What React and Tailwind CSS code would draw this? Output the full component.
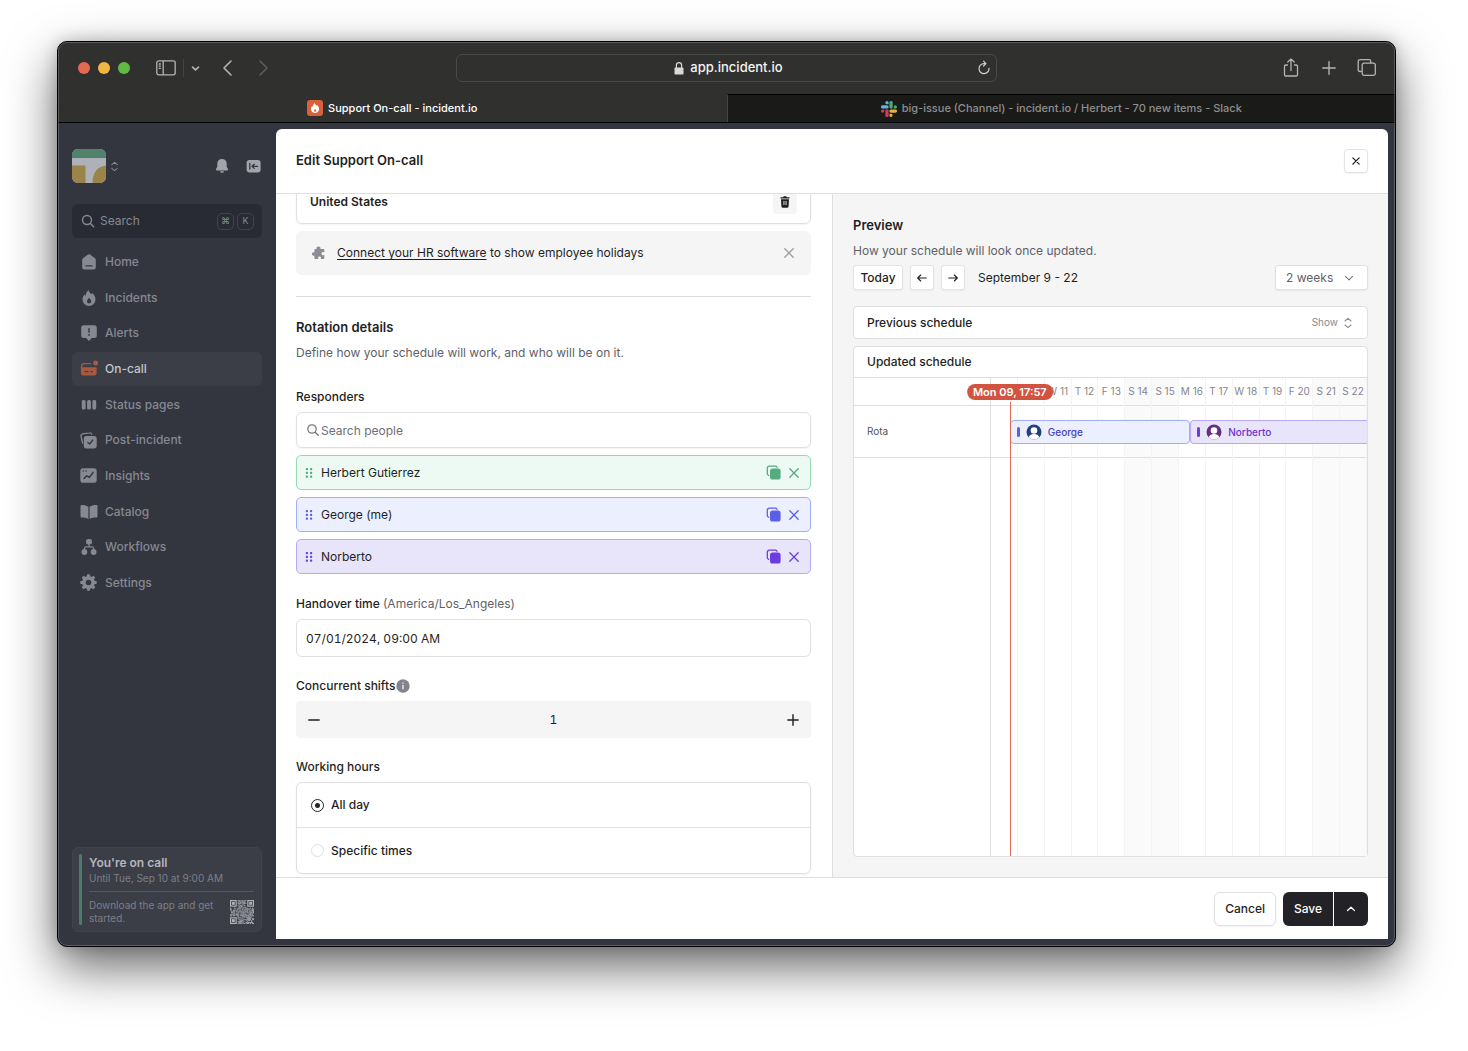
import { useState } from "react";

const NAV = [
  { label: "Home", icon: HomeIcon },
  { label: "Incidents", icon: FlameIcon },
  { label: "Alerts", icon: AlertIcon },
  { label: "On-call", icon: PagerIcon, active: true },
  { label: "Status pages", icon: StatusIcon },
  { label: "Post-incident", icon: PostIcon },
  { label: "Insights", icon: InsightsIcon },
  { label: "Catalog", icon: CatalogIcon },
  { label: "Workflows", icon: WorkflowIcon },
  { label: "Settings", icon: CogIcon },
];

const RESPONDERS = [
  { name: "Herbert Gutierrez", row: "bg-[#ecfaf3] border-[#92dbb3]", ink: "text-[#55ab7e]" },
  { name: "George (me)", row: "bg-[#ebeffe] border-[#a3adf5]", ink: "text-[#5b5fe8]" },
  { name: "Norberto", row: "bg-[#e8e4fa] border-[#b9aaf3]", ink: "text-[#6a3de0]" },
];

const DAYS = [
  "", "", "W 11", "T 12", "F 13", "S 14", "S 15",
  "M 16", "T 17", "W 18", "T 19", "F 20", "S 21", "S 22",
];

function Icon({ children, className = "size-4", box = 16 }) {
  return (
    <svg viewBox={`0 0 ${box} ${box}`} className={`shrink-0 ${className}`} fill="currentColor" aria-hidden="true">
      {children}
    </svg>
  );
}

function Line({ d, className = "size-4", box = 16, width = 1.3 }) {
  return (
    <svg
      viewBox={`0 0 ${box} ${box}`}
      className={`shrink-0 ${className}`}
      fill="none"
      stroke="currentColor"
      strokeWidth={width}
      strokeLinecap="round"
      strokeLinejoin="round"
      aria-hidden="true"
    >
      <path d={d} />
    </svg>
  );
}

function HomeIcon() {
  return (
    <Icon>
      <path fillRule="evenodd" d="M7 .6a1.6 1.6 0 0 1 2 0l5 3.7c.5.4.8 1 .8 1.600V13a2.500 2.500 0 0 1-2.500 2.500H3.700A2.500 2.500 0 0 1 1.200 13V5.900c0-.6.3-1.200.8-1.600zM5 11.300a.65.65 0 0 0 0 1.300h6a.65.65 0 0 0 0-1.300z" />
    </Icon>
  );
}

function FlameIcon() {
  return (
    <Icon>
      <path fillRule="evenodd" d="M7.600 0c.3 2 1.600 3 2.700 4.300.5-.3.7-.7.900-1.200 2 1.700 3.300 3.900 3.300 6.300A6.500 6.500 0 0 1 8 16a6.500 6.500 0 0 1-6.500-6.600c0-2 .8-3.400 2-4.800.2.700.5 1.100 1 1.400C4.700 3.600 5.800 1.400 7.600 0zM8.200 7.800C7.600 9 6 9.700 6 11.400a2.100 2.100 0 0 0 4.200 0c0-1.500-1.300-2.200-2-3.600z" />
    </Icon>
  );
}

function AlertIcon() {
  return (
    <Icon>
      <path fillRule="evenodd" d="M2.700.3h10.600A2.500 2.500 0 0 1 15.800 2.800v7.600a2.500 2.500 0 0 1-2.500 2.500H10.800L8.600 15.500a.8.8 0 0 1-1.200 0L5.200 12.900H2.700A2.500 2.500 0 0 1 .2 10.400V2.800A2.500 2.500 0 0 1 2.700.3zM7.300 3.600v3.700a.7.7 0 0 0 1.400 0V3.600a.7.7 0 0 0-1.400 0zM8 9a.9.9 0 1 0 0 1.800A.9.9 0 0 0 8 9z" />
    </Icon>
  );
}

function PagerIcon() {
  return (
    <Icon className="size-[18px]" box={18}>
      <circle cx="15.600" cy="3" r="2.500" />
      <path d="M1.600 8V5.900a2.300 2.300 0 0 1 2.300-2.300h6.900M1.600 8h14.300" fill="none" stroke="currentColor" strokeWidth="1.400" strokeLinecap="round" />
      <path fillRule="evenodd" d="M.9 8h15.700v4.800a2.800 2.800 0 0 1-2.800 2.800H3.700A2.800 2.800 0 0 1 .9 12.800zM5 11a.6.6 0 0 0 0 1.300h3A.6.6 0 0 0 8 11zm6 0a.6.6 0 0 0 0 1.300h1.300a.6.6 0 0 0 0-1.300z" />
    </Icon>
  );
}

function StatusIcon() {
  return (
    <Icon>
      <rect x="0.800" y="3" width="3.800" height="9.600" rx="1.500" />
      <rect x="6.100" y="3" width="3.800" height="9.600" rx="1.500" />
      <rect x="11.400" y="3" width="3.800" height="9.600" rx="1.500" />
    </Icon>
  );
}

function PostIcon() {
  return (
    <Icon className="size-[17px]" box={17}>
      <path d="M2.600 11.200 1 4.200a2 2 0 0 1 1.600-2.400L9.600.9a2 2 0 0 1 2.200 1.300" fill="none" stroke="currentColor" strokeWidth="1.300" strokeLinecap="round" />
      <path fillRule="evenodd" d="M6.500 4h7.500a2.700 2.700 0 0 1 2.700 2.700v7a2.700 2.700 0 0 1-2.700 2.700H6.500a2.700 2.700 0 0 1-2.700-2.700v-7A2.700 2.700 0 0 1 6.500 4zM12.300 7.600 9.500 11.100 8.300 10a.6.6 0 0 0-.9.900l1.800 1.600a.6.6 0 0 0 .8-.1l3.300-4a.6.6 0 0 0-1-.8z" />
    </Icon>
  );
}

function InsightsIcon() {
  return (
    <Icon className="size-[17px]" box={17}>
      <rect x="0.300" y="1.300" width="16.400" height="14.400" rx="2.800" />
      <path d="M4 11.600 6.800 8.800l2.400 1.700L13.200 5.400M3.200 4h.1M6 4h.1" fill="none" stroke="#33363f" strokeWidth="1.400" strokeLinecap="round" strokeLinejoin="round" />
    </Icon>
  );
}

function CatalogIcon() {
  return (
    <Icon className="size-[18px]" box={18}>
      <path d="M8.400 3.800C6.500 2.600 4.300 2 1.500 2A1 1 0 0 0 .5 3v10.400a1 1 0 0 0 1 1c2.800 0 5 .4 6.900 1.500zM9.600 3.800C11.500 2.600 13.700 2 16.500 2a1 1 0 0 1 1 1v10.400a1 1 0 0 1-1 1c-2.800 0-5 .4-6.900 1.500z" />
    </Icon>
  );
}

function WorkflowIcon() {
  return (
    <Icon>
      <rect x="5" y="0" width="6" height="5.600" rx="2.300" />
      <circle cx="3.400" cy="13" r="2.900" />
      <circle cx="12.600" cy="13" r="2.900" />
      <path d="M8 5v2.800M3.400 11V9.600c0-1 .7-1.800 1.800-1.800h5.600c1.100 0 1.800.8 1.800 1.800V11" fill="none" stroke="currentColor" strokeWidth="1.200" />
    </Icon>
  );
}

function CogIcon() {
  return (
    <Icon className="size-[17px]" box={17}>
      <circle cx="8.500" cy="8.500" r="4.600" fill="none" stroke="currentColor" strokeWidth="3.600" />
      {[0, 45, 90, 135, 180, 225, 270, 315].map((a) => (
        <rect key={a} x="6.900" y="0.200" width="3.200" height="4" rx="1" transform={`rotate(${a} 8.500 8.500)`} />
      ))}
    </Icon>
  );
}

function CopyIcon() {
  return (
    <Icon>
      <path d="M2.700 10.400A1.900 1.900 0 0 1 1.300 8.600V3.200a2 2 0 0 1 2-2h5.900a2 2 0 0 1 1.800 1.100" fill="none" stroke="currentColor" strokeWidth="1.300" strokeLinecap="round" />
      <rect x="4" y="3.600" width="10.600" height="11" rx="2.600" />
    </Icon>
  );
}

function Sorter({ className }) {
  return <Line d="M3 4 6 1.400 9 4M3 8l3 2.600L9 8" box={12} width={1.1} className={className} />;
}

const CROSS = "M3.800 3.800l8.400 8.400M12.200 3.800l-8.400 8.400";

function SlackLogo() {
  return (
    <svg viewBox="0 0 16 16" className="size-4" aria-hidden="true">
      <path fill="#5fb6dc" d="M6 0a1.600 1.600 0 0 0 0 3.300h1.600V1.600A1.600 1.600 0 0 0 6 0zM1.600 4.300a1.600 1.600 0 0 0 0 3.300H6a1.600 1.600 0 0 0 0-3.300z" />
      <path fill="#4fa878" d="M16 6a1.600 1.600 0 0 0-3.300 0v1.600h1.700A1.600 1.600 0 0 0 16 6zM11.700 6V1.600a1.600 1.600 0 0 0-3.300 0V6a1.600 1.600 0 0 0 3.300 0z" />
      <path fill="#e3b03e" d="M10 16a1.600 1.600 0 0 0 0-3.300H8.400v1.700A1.600 1.600 0 0 0 10 16zM14.400 11.700a1.600 1.600 0 0 0 0-3.300H10a1.600 1.600 0 0 0 0 3.300z" />
      <path fill="#cb3d5b" d="M0 10a1.600 1.600 0 0 0 3.300 0V8.400H1.600A1.600 1.600 0 0 0 0 10zM4.300 10v4.400a1.600 1.600 0 0 0 3.300 0V10a1.600 1.600 0 0 0-3.300 0z" />
    </svg>
  );
}

function BrowserChrome() {
  return (
    <header className="shrink-0 bg-[#30302e] text-[#b4b4b2]">
      <div className="grid h-[52px] grid-cols-[1fr_minmax(0,541px)_1fr] items-center">
        <div className="flex items-center pl-5">
          <div className="flex gap-2">
            <span className="size-3 rounded-full bg-[#e4694f]" />
            <span className="size-3 rounded-full bg-[#f0b840]" />
            <span className="size-3 rounded-full bg-[#5fbb46]" />
          </div>
          <button aria-label="Toggle sidebar" className="ml-[26px]">
            <svg viewBox="0 0 20 16" className="h-4 w-5" fill="none" stroke="currentColor" strokeWidth="1.300" aria-hidden="true">
              <rect x="0.800" y="0.800" width="18.400" height="14" rx="2" />
              <path d="M7.200.8v14M2.800 4h2M2.800 6.200h2M2.800 8.400h2" />
            </svg>
          </button>
          <span className="ml-[7px] h-[18px] w-px bg-[#444442]" />
          <button aria-label="Tab groups" className="ml-[6px]">
            <Line d="M2.500 4.200l3 2.600 3-2.600" box={11} width={1.7} className="size-[11px]" />
          </button>
          <button aria-label="Back" className="ml-[18px]">
            <Line d="M12 2 5 9l7 7" box={18} width={1.6} className="size-[18px]" />
          </button>
          <button aria-label="Forward" className="ml-[17px] text-[#5c5c5a]">
            <Line d="M6 2l7 7-7 7" box={18} width={1.6} className="size-[18px]" />
          </button>
        </div>
        <div className="flex h-7 items-center rounded-md border border-[#494947] pr-1 pl-6 text-[13px] font-medium text-[#f4f4f2]">
          <div className="flex flex-1 items-center justify-center gap-[6px]">
            <svg viewBox="0 0 10 13" className="h-[13px] w-[10px]" aria-hidden="true">
              <path d="M2.400 6V3.300a2.600 2.600 0 0 1 5.200 0V6" fill="none" stroke="#d8d8d6" strokeWidth="1.200" />
              <rect x="0.500" y="5.400" width="9" height="7.200" rx="1.200" fill="#d8d8d6" />
            </svg>
            app.incident.io
          </div>
          <button aria-label="Reload" className="text-[#cfcfcd]">
            <Line d="M13 8.400A5 5 0 1 1 8 3.600h1.500M7.600 1.200 9.900 3.600 7.600 6" width={1.2} />
          </button>
        </div>
        <div className="flex items-center justify-end gap-[18px] pr-[18px]">
          <button aria-label="Share">
            <Line d="M6.500 7H4.800A1.300 1.300 0 0 0 3.500 8.300v8.400A1.300 1.300 0 0 0 4.800 18h10.400a1.300 1.300 0 0 0 1.300-1.300V8.300A1.300 1.300 0 0 0 15.200 7h-1.700M10 12.500V1M6.800 4 10 .9 13.200 4" box={20} className="size-5" />
          </button>
          <button aria-label="New tab">
            <Line d="M10 3.800v12.400M3.800 10h12.400" box={20} width={1.4} className="size-5" />
          </button>
          <button aria-label="Show tabs">
            <Line d="M4 13.500H3A1.800 1.800 0 0 1 1.200 11.700V3.500A1.800 1.800 0 0 1 3 1.700h9a1.800 1.800 0 0 1 1.800 1.800v1M7 5.200h9.500a1.800 1.800 0 0 1 1.800 1.800v8.500a1.800 1.800 0 0 1-1.800 1.800H7a1.800 1.800 0 0 1-1.800-1.800V7A1.800 1.800 0 0 1 7 5.200z" box={20} className="size-5" />
          </button>
        </div>
      </div>
      <nav className="grid h-[29px] grid-cols-2 border-b border-black text-[11px] font-medium">
        <a href="#support" className="flex items-center justify-center gap-[5px] text-white">
          <span className="flex size-4 items-center justify-center rounded-[3px] bg-[#d9603a]">
            <Icon className="size-[10px]">
              <path fillRule="evenodd" d="M7.600 0c.3 2 1.600 3 2.700 4.300.5-.3.7-.7.900-1.200 2 1.700 3.300 3.900 3.300 6.300A6.500 6.500 0 0 1 8 16a6.500 6.500 0 0 1-6.500-6.600c0-2 .8-3.400 2-4.800.2.700.5 1.100 1 1.400C4.700 3.600 5.800 1.400 7.600 0zM8.200 9C7.600 10 6.500 10.900 6.500 12.500a1.700 1.700 0 0 0 3.400 0C9.900 11 8.900 10.400 8.200 9z" />
            </Icon>
          </span>
          Support On-call - incident.io
        </a>
        <a href="#slack" className="flex items-center justify-center gap-[5px] border-t border-l border-t-black border-l-[#444442] bg-[#1a1a19] text-[#8f8f8d]">
          <SlackLogo />
          big-issue (Channel) - incident.io / Herbert - 70 new items - Slack
        </a>
      </nav>
    </header>
  );
}

// Finder squares in three corners, the rest filled from a small hash
function QrCode() {
  const n = 25;
  const cells = [];
  for (let y = 0; y < n; y++) {
    for (let x = 0; x < n; x++) {
      const corner = (x < 8 && y < 8) || (x >= n - 8 && y < 8) || (x < 8 && y >= n - 8);
      if (!corner && ((x * 73 + y * 151 + x * y * 31 + ((x * x * 7) ^ (y * y * 13))) % 7) > 2) cells.push([x, y]);
    }
  }
  return (
    <svg viewBox="0 0 25 25" className="size-6 shrink-0 text-[#b0b2ba]" fill="currentColor" aria-label="QR code" role="img">
      {[[0, 0], [18, 0], [0, 18]].map(([x, y]) => (
        <g key={`${x}-${y}`}>
          <rect x={x + 0.6} y={y + 0.6} width="5.800" height="5.800" fill="none" stroke="currentColor" strokeWidth="1.200" />
          <rect x={x + 2} y={y + 2} width="3" height="3" />
        </g>
      ))}
      {cells.map(([x, y]) => (
        <rect key={`${x}-${y}`} x={x} y={y} width="1" height="1" />
      ))}
    </svg>
  );
}

function Sidebar() {
  return (
    <aside className="flex w-[218px] shrink-0 flex-col px-[14px] pt-[26px] pb-[14px] text-[#868892]">
      <div className="flex items-center">
        <button aria-label="Switch organisation" className="flex items-center gap-[3px]">
          <svg viewBox="0 0 34 34" className="size-[34px] rounded-md" aria-hidden="true">
            <rect width="34" height="34" fill="#aeb1b8" />
            <rect width="34" height="9" fill="#50826b" />
            <path d="M0 16.500h13.500V34H0z" fill="#9a844b" />
            <path d="M34 16.500V34H20.500C20.500 24 25 17.500 34 16.500z" fill="#9a844b" />
          </svg>
          <Sorter className="size-[11px]" />
        </button>
        <button aria-label="Notifications" className="ml-auto text-[#a2a4ac]">
          <Icon>
            <path d="M8 1C5.200 1 3.300 3 3.300 5.500v3.300L2 11c-.4.700 0 1.400.8 1.400h10.400c.8 0 1.200-.7.800-1.400l-1.300-2.200V5.500C12.700 3 10.800 1 8 1zM6 13.200a2 1.600 0 0 0 4 0z" />
          </Icon>
        </button>
        <button aria-label="Collapse sidebar" className="ml-4 text-[#a2a4ac]">
          <Icon>
            <rect x="0.600" y="2" width="14" height="12.600" rx="3" />
            <path d="M3.800 5.500v5.600M11.600 8.300H6.200M8.200 6.200 6.100 8.300l2.100 2.100" fill="none" stroke="#33363f" strokeWidth="1.300" strokeLinecap="round" />
          </Icon>
        </button>
      </div>

      <button className="mt-[21px] flex h-[34px] items-center rounded-md bg-[#282b34] px-2 text-[12px]">
        <Line d="M7 2.500a4.500 4.500 0 1 0 0 9 4.500 4.500 0 0 0 0-9zM10.400 10.400l3.300 3.300" width={1.4} />
        <span className="ml-1 flex-1 text-left">Search</span>
        <kbd className="flex size-[17px] items-center justify-center rounded-[5px] border border-[#41444d] font-[Inter] text-[9px]">⌘</kbd>
        <kbd className="ml-[3px] flex size-[17px] items-center justify-center rounded-[5px] border border-[#41444d] font-[Inter] text-[9px]">K</kbd>
      </button>

      <nav className="mt-[7px] flex h-[355px] flex-col justify-between text-[12px] font-medium">
        {NAV.map(({ label, icon: Glyph, active }) => (
          <a
            key={label}
            href="#"
            className={`flex h-[34px] items-center gap-2 rounded-md px-2 ${active ? "bg-[#3b3e47] text-[#c3c5cb]" : ""}`}
          >
            <span className={`flex w-[17px] justify-center ${active ? "text-[#a85a41]" : ""}`}>
              <Glyph />
            </span>
            {label}
          </a>
        ))}
      </nav>

      <section className="mt-auto flex gap-[7px] rounded-md border border-[#40434c] bg-[#3b3e47] p-[6px] pr-[7px]">
        <div className="w-[3px] rounded-full bg-[#4b7b6b]" />
        <div className="flex-1">
          <h2 className="text-[12px]/[18px] font-semibold text-[#b4b6be]">You&apos;re on call</h2>
          <p className="text-[10px]/[12px] text-[#7b7e88]">Until Tue, Sep 10 at 9:00 AM</p>
          <div className="mt-[7px] flex items-center justify-between border-t border-[#53576a] pt-[7px]">
            <p className="w-[132px] text-[10px]/[13px] text-[#7b7e88]">Download the app and get started.</p>
            <QrCode />
          </div>
        </div>
      </section>
    </aside>
  );
}

function Grip({ className }) {
  return (
    <Icon className={`size-3 ${className}`} box={12}>
      {[1, 4.800, 8.600].map((y) => (
        <g key={y}>
          <rect x="0.800" y={y} width="2.200" height="2.200" rx="0.700" />
          <rect x="5" y={y} width="2.200" height="2.200" rx="0.700" />
        </g>
      ))}
    </Icon>
  );
}

function RotationForm() {
  const [people, setPeople] = useState(RESPONDERS);
  const [shifts, setShifts] = useState(1);
  const [hours, setHours] = useState("all");

  return (
    <div className="overflow-hidden pr-[21px] pl-5">
      <div className="-mt-4 flex h-[46px] items-center justify-between rounded-md border border-[#dfdfe1] px-[13px] pt-px text-[12px] font-semibold shadow-xs">
        United States
        <button aria-label="Remove country" className="flex size-6 items-center justify-center rounded bg-[#f5f5f5]">
          <Icon className="size-3" box={12}>
            <path fillRule="evenodd" d="M4.200 1.200A1 1 0 0 1 5.200.3h1.600a1 1 0 0 1 1 .9h2.700v1.300h-9V1.200zM2 3.200h8l-.4 7a1.600 1.600 0 0 1-1.600 1.500H4a1.600 1.600 0 0 1-1.600-1.500zM4.500 5v4h.9V5zm2.100 0v4h.9V5z" />
          </Icon>
        </button>
      </div>

      <div className="mt-[7px] flex h-11 items-center rounded-md bg-[#f5f5f5] px-[14px] text-[12px]">
        <Icon className="size-4 text-[#8c8c96]">
          <path d="M8.500 1.500c1.200 0 2 .8 2 1.600 0 .4-.1.600-.2.800h3a1 1 0 0 1 1 1v2.400c-.4 0-.8-.3-1.300-.3-.9 0-1.500.7-1.500 1.600s.6 1.600 1.500 1.600c.5 0 .9-.3 1.300-.3v3a1 1 0 0 1-1 1h-2.600c.1-.3.300-.6.300-1 0-.8-.7-1.400-1.500-1.400s-1.500.6-1.500 1.400c0 .4.2.7.300 1H5.400a1 1 0 0 1-1-1v-2.400c-.3.100-.5.200-.8.200-1 0-1.700-.8-1.700-1.700s.7-1.700 1.700-1.700c.3 0 .5.100.8.200V4.900a1 1 0 0 1 1-1h1.300c-.1-.2-.2-.4-.2-.8 0-.8.8-1.600 2-1.600z" />
        </Icon>
        <p className="ml-[11px] flex-1">
          <a href="#hr" className="underline underline-offset-2">Connect your HR software</a> to show employee holidays
        </p>
        <button aria-label="Dismiss" className="text-[#9a9aa2]">
          <Line d={CROSS} />
        </button>
      </div>

      <hr className="mt-[21px] border-[#dcdce2]" />

      <h2 className="mt-[19px] text-[13px]/[22px] font-semibold">Rotation details</h2>
      <p className="mt-[5px] text-[12px]/[20px] text-[#5f5f68]">Define how your schedule will work, and who will be on it.</p>

      <label htmlFor="people" className="mt-6 block text-[12px]/[20px] font-medium">Responders</label>
      <div className="mt-[5px] flex h-9 items-center rounded-md border border-[#dfdfe1] px-2 shadow-xs">
        <Line d="M7 2.800a4.200 4.200 0 1 0 0 8.400 4.200 4.200 0 0 0 0-8.400zM10.200 10.200l3 3" width={1.3} className="size-4 text-[#77777f]" />
        <input id="people" placeholder="Search people" className="h-full flex-1 text-[12px] outline-none placeholder:text-[#6e6e78]" />
      </div>
      <ul className="mt-[7px] flex flex-col gap-[7px]">
        {people.map((p) => (
          <li key={p.name} className={`flex h-[35px] items-center rounded-[5px] border px-2 text-[12px] ${p.row}`}>
            <Grip className={p.ink} />
            <span className="ml-1 flex-1">{p.name}</span>
            <button aria-label={`Duplicate ${p.name}`} className={p.ink}>
              <CopyIcon />
            </button>
            <button
              aria-label={`Remove ${p.name}`}
              className={`ml-1 ${p.ink}`}
              onClick={() => setPeople(people.filter((o) => o !== p))}
            >
              <Line d={CROSS} />
            </button>
          </li>
        ))}
      </ul>

      <label htmlFor="handover" className="mt-5 block text-[12px]/[20px] font-medium">
        Handover time <span className="font-normal text-[#5f5f68]">(America/Los_Angeles)</span>
      </label>
      <input
        id="handover"
        defaultValue="07/01/2024, 09:00 AM"
        className="mt-[5px] h-[38px] w-full rounded-md border border-[#dfdfe1] px-[9px] text-[12px] tabular-nums outline-none"
      />

      <div className="mt-[19px] flex h-5 items-center">
        <label htmlFor="shifts" className="text-[12px]/[20px] font-medium">Concurrent shifts</label>
        <Icon className="ml-px size-[14px]" box={14}>
          <circle cx="7" cy="7" r="6.700" fill="#83838c" />
          <path d="M7 6v4.300M7 3.500v1.200" stroke="#fff" strokeWidth="1.200" />
        </Icon>
      </div>
      <div className="mt-[5px] flex h-[37px] items-center rounded bg-[#f5f5f5] px-[10px]">
        <button aria-label="Fewer shifts" onClick={() => setShifts(Math.max(1, shifts - 1))}>
          <Line d="M2.800 8h10.400" width={1.4} />
        </button>
        <input id="shifts" readOnly value={shifts} className="min-w-0 flex-1 text-center text-[12px] tabular-nums outline-none" />
        <button aria-label="More shifts" onClick={() => setShifts(shifts + 1)}>
          <Line d="M2.800 8h10.400M8 2.800v10.400" width={1.4} />
        </button>
      </div>

      <fieldset className="mt-[19px]">
        <legend className="text-[12px]/[20px] font-medium">Working hours</legend>
        <div className="mt-[5px] divide-y divide-[#dfdfe1] rounded-md border border-[#dfdfe1] shadow-xs">
          {[["all", "All day"], ["specific", "Specific times"]].map(([value, text]) => (
            <label key={value} className="flex h-[45px] items-center gap-[7px] px-[14px] text-[12px] font-medium">
              <input
                type="radio"
                name="hours"
                value={value}
                checked={hours === value}
                onChange={() => setHours(value)}
                className="size-[13px] appearance-none rounded-full border border-[#dfdfe1] bg-white checked:border-[#26262b] checked:bg-[radial-gradient(circle,#26262b_0_2px,white_3px)]"
              />
              {text}
            </label>
          ))}
        </div>
      </fieldset>
    </div>
  );
}

function Avatar({ className }) {
  return (
    <svg viewBox="0 0 16 16" className={`size-4 ${className}`} aria-hidden="true">
      <circle cx="8" cy="8" r="7.500" fill="currentColor" />
      <circle cx="8" cy="6.500" r="3.300" fill="#fff" />
      <path d="M2.700 13.200C3.500 11 5.500 9.900 8 9.900s4.500 1.100 5.300 3.300A7.500 7.500 0 0 1 8 15.500a7.500 7.500 0 0 1-5.300-2.300z" fill="#fff" />
    </svg>
  );
}

function Timeline() {
  return (
    <div className="relative flex flex-1 overflow-hidden">
      <div className="w-[137px] shrink-0 border-r border-[#dfdfe1] text-[#54545c]">
        <div className="h-7 border-b border-[#dfdfe1]" />
        <div className="flex h-[52px] items-center border-b border-[#dfdfe1] px-[13px] text-[10px]">Rota</div>
      </div>
      <div className="relative flex-1">
        <div className="grid h-full grid-cols-14">
          {DAYS.map((day, i) => (
            <div key={i} className={`min-w-0 border-r border-[#f4f4f5] ${day.startsWith("S") ? "bg-[#fafafa]" : ""}`}>
              <div className="flex h-7 items-center justify-center border-b border-[#dfdfe1] text-[10px] whitespace-nowrap text-[#85858d]">
                {day}
              </div>
              <div className="h-[52px] border-b border-[#dfdfe1]" />
            </div>
          ))}
        </div>
        {/* shifts, the first starts at 17:57 on the Monday */}
        <div className="absolute inset-x-0 top-[42px] flex h-6 text-[10px] font-medium">
          <div className="ml-[5%] flex w-[48%] items-center rounded border border-[#a3adf5] bg-[#ebeffe] pl-[6px] text-[#463fc4]">
            <span className="h-[10px] w-[3px] rounded-full bg-[#5b5fe8]" />
            <Avatar className="mx-[6px] text-[#24407c]" />
            George
          </div>
          <div className="flex flex-1 items-center rounded-l border border-r-0 border-[#b9aaf3] bg-[#e8e4fa] pl-[6px] text-[#6a35cf]">
            <span className="h-[10px] w-[3px] rounded-full bg-[#6a3de0]" />
            <Avatar className="mx-[6px] text-[#662d80]" />
            Norberto
          </div>
        </div>
        <div className="absolute top-6 bottom-0 left-[5%] border-l border-[#de6b57]" />
        <span className="absolute top-[6px] left-[5%] -translate-x-1/2 rounded-full bg-[#d2533f] px-[6px] text-[11px]/[16px] font-semibold whitespace-nowrap text-white">
          Mon 09, 17:57
        </span>
      </div>
    </div>
  );
}

function Preview() {
  return (
    <div className="flex flex-col border-l border-[#dfdfe1] bg-[#f5f5f5] px-5 pt-5 pb-5">
      <h2 className="text-[13px]/[22px] font-semibold">Preview</h2>
      <p className="mt-[5px] text-[12px]/[20px] text-[#5f5f68]">How your schedule will look once updated.</p>
      <div className="mt-1 flex h-[25px] items-stretch text-[12px]">
        <button className="w-[50px] rounded-[3px] border border-[#e3e3e5] bg-white font-medium shadow-xs">Today</button>
        <button aria-label="Previous" className="ml-[7px] flex w-6 items-center justify-center rounded-[3px] border border-[#e3e3e5] bg-white shadow-xs">
          <Line d="M10.300 6H1.700M4.700 3 1.700 6l3 3" box={12} width={1.1} className="size-3" />
        </button>
        <button aria-label="Next" className="ml-[7px] flex w-6 items-center justify-center rounded-[3px] border border-[#e3e3e5] bg-white shadow-xs">
          <Line d="M1.700 6h8.600M7.300 3l3 3-3 3" box={12} width={1.1} className="size-3" />
        </button>
        <span className="ml-[13px] self-center">September 9 - 22</span>
        <div className="relative ml-auto w-[93px]">
          <select aria-label="Range" className="size-full appearance-none rounded-[3px] border border-[#dfdfe6] bg-white pl-[10px] text-[#5f5f68] shadow-xs">
            <option>2 weeks</option>
          </select>
          <Line d="M2.500 4.300 6 7.800l3.500-3.500" box={12} width={1.1} className="pointer-events-none absolute top-[7px] right-[13px] size-3 text-[#77777f]" />
        </div>
      </div>

      <div className="mt-4 flex h-[33px] shrink-0 items-center justify-between rounded border border-[#dfdfe1] bg-white px-[13px]">
        <h3 className="text-[12px] font-medium">Previous schedule</h3>
        <button className="flex items-center gap-1 text-[10px] text-[#8a8a92]">
          Show
          <Sorter className="size-3" />
        </button>
      </div>

      <section className="mt-[7px] flex flex-1 flex-col rounded border border-[#dfdfe1] bg-white">
        <h3 className="flex h-[31px] items-center border-b border-[#dfdfe1] px-[13px] text-[12px] font-medium">Updated schedule</h3>
        <Timeline />
      </section>
    </div>
  );
}

export default function App() {
  return (
    <div className="flex h-screen bg-white pt-[41px] pr-[72px] pb-[104px] pl-[57px] font-[Inter,sans-serif] text-[#1f1f23]">
      <div className="relative flex flex-1 flex-col overflow-hidden rounded-[10px] border border-black bg-[#33363f] shadow-[0_20px_50px_rgba(0,0,0,0.6),0_0_16px_rgba(0,0,0,0.2)]">
        <BrowserChrome />
        <div className="flex min-h-0 flex-1">
          <Sidebar />
          <main className="mt-[6px] mr-[7px] mb-[7px] grid min-w-0 flex-1 grid-rows-[65px_minmax(0,1fr)_62px] overflow-hidden rounded-t-md bg-white">
            <header className="flex items-center justify-between border-b border-[#dfdfe1] px-5">
              <h1 className="text-[13px] font-semibold">Edit Support On-call</h1>
              <button aria-label="Close" className="flex size-6 items-center justify-center rounded border border-[#e3e3e5] shadow-xs">
                <Line d={CROSS} width={1.7} className="size-3" />
              </button>
            </header>
            <div className="grid min-h-0 grid-cols-2">
              <RotationForm />
              <Preview />
            </div>
            <footer className="flex items-center justify-end border-t border-[#dfdfe1] px-5 text-[12px] font-medium">
              <button className="h-[34px] rounded-md border border-[#e0e0e2] px-[10px] shadow-xs">Cancel</button>
              <button className="ml-[7px] h-[34px] w-[50px] rounded-l-md bg-[#232327] text-white">Save</button>
              <button aria-label="More save options" className="ml-px flex h-[34px] w-[34px] items-center justify-center rounded-r-md bg-[#232327] text-white">
                <Line d="M2.500 7.500 6 4.200l3.500 3.300" box={12} className="size-3" />
              </button>
            </footer>
          </main>
        </div>
        {/* light rim inside the window edge */}
        <div className="pointer-events-none absolute inset-0 rounded-[9px] border border-white/20" />
      </div>
    </div>
  );
}
